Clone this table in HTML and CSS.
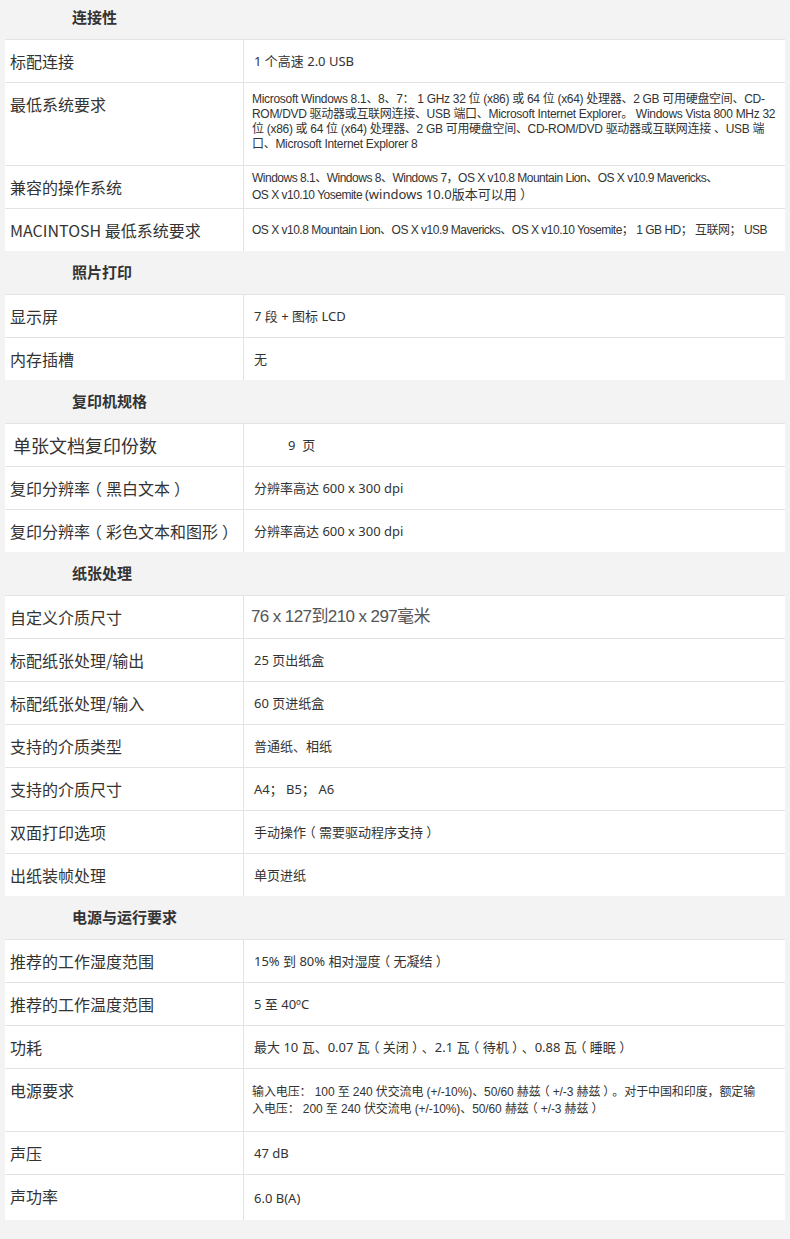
FILE: index.html
```html
<!DOCTYPE html>
<html lang="zh-CN">
<head>
<meta charset="utf-8">
<title>规格</title>
<link rel="stylesheet" href="styles.css">
</head>
<body>
<div class="specs">
  <div class="sec first">连接性</div>
  <div class="row"><div class="label">标配连接</div><div class="val">1 个高速 2.0 USB</div></div>
  <div class="row"><div class="label">最低系统要求</div><div class="val cond tall">Microsoft Windows 8.1、8、7： 1 GHz 32 位 (x86) 或 64 位 (x64) 处理器、2 GB 可用硬盘空间、CD-<br>ROM/DVD 驱动器或互联网连接、USB 端口、Microsoft Internet Explorer。 Windows Vista 800 MHz 32<br>位 (x86) 或 64 位 (x64) 处理器、2 GB 可用硬盘空间、CD-ROM/DVD 驱动器或互联网连接 、USB 端<br>口、Microsoft Internet Explorer 8</div></div>
  <div class="row"><div class="label">兼容的操作系统</div><div class="val cond two">Windows 8.1、Windows 8、Windows 7，OS X v10.8 Mountain Lion、OS X v10.9 Mavericks、<br>OS X v10.10 Yosemite <span class="norm">(windows 10.0版本可以用<span class="pc">）</span></span></div></div>
  <div class="row"><div class="label">MACINTOSH 最低系统要求</div><div class="val cond mac">OS X v10.8 Mountain Lion、OS X v10.9 Mavericks、OS X v10.10 Yosemite； 1 GB HD； 互联网； USB</div></div>

  <div class="sec">照片打印</div>
  <div class="row"><div class="label">显示屏</div><div class="val">7 段 + 图标 LCD</div></div>
  <div class="row"><div class="label">内存插槽</div><div class="val">无</div></div>

  <div class="sec">复印机规格</div>
  <div class="row"><div class="label big">单张文档复印份数</div><div class="val indent">9&nbsp; 页</div></div>
  <div class="row"><div class="label">复印分辨率<span class="po">（</span>黑白文本<span class="pc">）</span></div><div class="val">分辨率高达 600 x 300 dpi</div></div>
  <div class="row"><div class="label">复印分辨率<span class="po">（</span>彩色文本和图形<span class="pc">）</span></div><div class="val">分辨率高达 600 x 300 dpi</div></div>

  <div class="sec">纸张处理</div>
  <div class="row"><div class="label">自定义介质尺寸</div><div class="val large">76 x 127到210 x 297毫米</div></div>
  <div class="row"><div class="label">标配纸张处理/输出</div><div class="val">25 页出纸盒</div></div>
  <div class="row"><div class="label">标配纸张处理/输入</div><div class="val">60 页进纸盒</div></div>
  <div class="row"><div class="label">支持的介质类型</div><div class="val">普通纸、相纸</div></div>
  <div class="row"><div class="label">支持的介质尺寸</div><div class="val">A4； B5； A6</div></div>
  <div class="row"><div class="label">双面打印选项</div><div class="val">手动操作<span class="po">（</span>需要驱动程序支持<span class="pc">）</span></div></div>
  <div class="row"><div class="label">出纸装帧处理</div><div class="val">单页进纸</div></div>

  <div class="sec">电源与运行要求</div>
  <div class="row"><div class="label">推荐的工作湿度范围</div><div class="val">15% 到 80% 相对湿度<span class="po">（</span>无凝结<span class="pc">）</span></div></div>
  <div class="row"><div class="label">推荐的工作温度范围</div><div class="val">5 至 40ºC</div></div>
  <div class="row"><div class="label">功耗</div><div class="val">最大 10 瓦、0.07 瓦<span class="po">（</span>关闭<span class="pc">）</span>、2.1 瓦<span class="po">（</span>待机<span class="pc">）</span>、0.88 瓦<span class="po">（</span>睡眠<span class="pc">）</span></div></div>
  <div class="row"><div class="label">电源要求</div><div class="val cond power">输入电压： 100 至 240 伏交流电 (+/-10%)、50/60 赫兹<span class="po">（</span>+/-3 赫兹<span class="pc">）</span>。对于中国和印度，额定输<br>入电压： 200 至 240 伏交流电 (+/-10%)、50/60 赫兹<span class="po">（</span>+/-3 赫兹<span class="pc">）</span></div></div>
  <div class="row"><div class="label">声压</div><div class="val">47 dB</div></div>
  <div class="row last"><div class="label">声功率</div><div class="val">6.0 B(A)</div></div>
</div>
</body>
</html>
```

FILE: styles.css
```css
html, body {
  margin: 0;
  padding: 0;
  background: #f3f3f3;
}

body {
  height: 1239px;
  overflow: hidden;
  color: #333;
  font-family: "Noto Sans CJK SC", "Noto Sans", sans-serif;
}

.specs {
  margin: 0 5px;
  display: flex;
  flex-direction: column;
}

.sec {
  height: 43px;
  line-height: 41px;
  padding-left: 67px;
  font-size: 15px;
  font-weight: bold;
  color: #333;
}

.sec.first {
  height: 39px;
  line-height: 33px;
}

.row {
  display: grid;
  grid-template-columns: 239px 1fr;
  background: #fff;
  border-top: 1px solid #e3e3e3;
  min-height: 42px;
}

.row.last {
  min-height: 45px;
}

.label {
  border-right: 1px solid #e3e3e3;
  padding: 10px 0 0 5px;
  font-size: 16px;
  line-height: 22px;
  color: #333;
  white-space: nowrap;
}

.label.big {
  font-size: 18px;
  padding-left: 8px;
  padding-top: 9px;
  line-height: 24px;
}

/* half-width bracket glyphs, padded back out so they sit centred in a full em */
.po,
.pc {
  font-family: "Noto Sans CJK SC", sans-serif;
  font-feature-settings: "halt" 1;
  letter-spacing: 0;
  padding: 0 0.25em;
}

.val {
  padding: 0 20px 0 10px;
  font-family: "Noto Sans", "Noto Sans CJK SC", sans-serif;
  font-size: 13px;
  line-height: 18px;
  color: #333;
  display: block;
  align-self: center;
}

.val.cond {
  font-family: "Liberation Sans", "Noto Sans CJK SC", sans-serif;
  font-size: 12px;
  letter-spacing: -0.3px;
  line-height: 15px;
  white-space: nowrap;
  padding-left: 8px;
}

.val.two,
.val.mac {
  letter-spacing: -0.5px;
}

.val.tall {
  align-self: start;
  padding-top: 9px;
  padding-bottom: 13px;
}

.val.power {
  letter-spacing: -0.1px;
  padding-top: 14px;
  padding-bottom: 14px;
}

.norm {
  font-family: "Noto Sans", "Noto Sans CJK SC", sans-serif;
  font-size: 13px;
  letter-spacing: 0;
}

.val.indent {
  padding-left: 44px;
}

.val.large {
  font-family: "Liberation Sans", "Noto Sans CJK SC", sans-serif;
  font-size: 17px;
  letter-spacing: -0.6px;
  color: #555;
  padding-left: 7px;
}
```
